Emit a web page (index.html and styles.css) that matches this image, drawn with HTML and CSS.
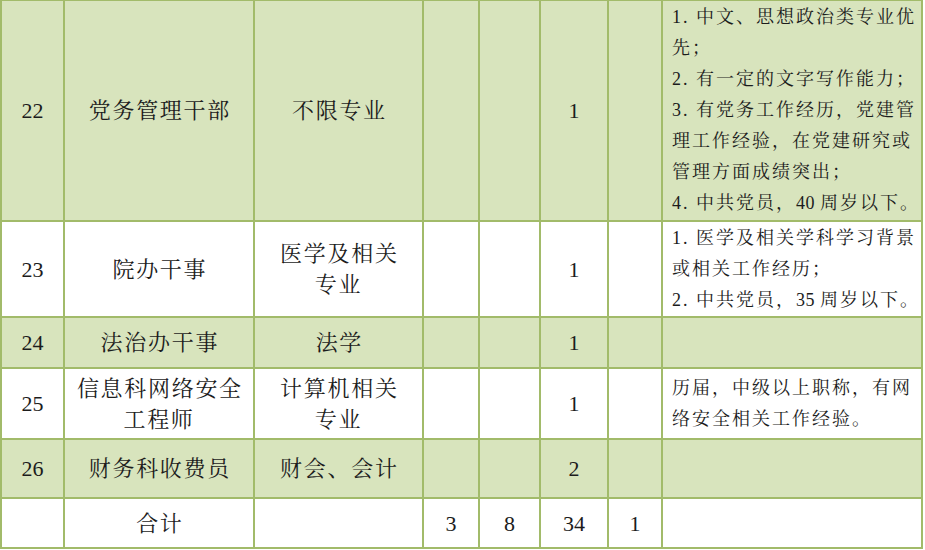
FILE: index.html
```html
<!DOCTYPE html>
<html lang="zh-CN">
<head>
<meta charset="utf-8">
<title>岗位表</title>
<link rel="stylesheet" href="styles.css">
</head>
<body>
<table class="grid">
  <colgroup>
    <col class="c-no">
    <col class="c-post">
    <col class="c-major">
    <col class="c-a">
    <col class="c-b">
    <col class="c-n">
    <col class="c-d">
    <col class="c-req">
  </colgroup>
  <tbody>
    <tr class="row green r22">
      <td>22</td>
      <td class="cn">党务管理干部</td>
      <td class="cn">不限专业</td>
      <td></td>
      <td></td>
      <td>1</td>
      <td></td>
      <td class="req">1. 中文、思想政治类专业优<br>先；<br>2. 有一定的文字写作能力；<br>3. 有党务工作经历，党建管<br>理工作经验，在党建研究或<br>管理方面成绩突出；<br>4. 中共党员，<span class="num">40 </span>周岁以下。</td>
    </tr>
    <tr class="row r23">
      <td>23</td>
      <td class="cn">院办干事</td>
      <td class="cn">医学及相关<br>专业</td>
      <td></td>
      <td></td>
      <td>1</td>
      <td></td>
      <td class="req">1. 医学及相关学科学习背景<br>或相关工作经历；<br>2. 中共党员，<span class="num">35 </span>周岁以下。</td>
    </tr>
    <tr class="row green r24">
      <td>24</td>
      <td class="cn">法治办干事</td>
      <td class="cn">法学</td>
      <td></td>
      <td></td>
      <td>1</td>
      <td></td>
      <td class="req"></td>
    </tr>
    <tr class="row r25">
      <td>25</td>
      <td class="cn">信息科网络安全<br>工程师</td>
      <td class="cn">计算机相关<br>专业</td>
      <td></td>
      <td></td>
      <td>1</td>
      <td></td>
      <td class="req">历届，中级以上职称，有网<br>络安全相关工作经验。</td>
    </tr>
    <tr class="row green r26">
      <td>26</td>
      <td class="cn">财务科收费员</td>
      <td class="cn">财会、会计</td>
      <td></td>
      <td></td>
      <td>2</td>
      <td></td>
      <td class="req"></td>
    </tr>
    <tr class="row r27">
      <td></td>
      <td class="cn">合计</td>
      <td></td>
      <td>3</td>
      <td>8</td>
      <td>34</td>
      <td>1</td>
      <td class="req"></td>
    </tr>
  </tbody>
</table>
</body>
</html>
```

FILE: styles.css
```css
html, body {
  margin: 0;
  padding: 0;
  background: #ffffff;
}

.grid {
  border-collapse: collapse;
  table-layout: fixed;
  width: 923px;
  margin-top: -1px;
  font-family: "Liberation Serif", "Times New Roman", "Noto Serif CJK SC", "Noto Sans CJK SC", serif;
  color: #1c1c1c;
}

.c-no { width: 63px; }
.c-post { width: 190px; }
.c-major { width: 169px; }
.c-a { width: 56px; }
.c-b { width: 61px; }
.c-n { width: 68px; }
.c-d { width: 54px; }
.c-req { width: 260px; }

.grid td {
  border: 2px solid #a2bb6a;
  text-align: center;
  vertical-align: middle;
  padding: 0;
  font-size: 22px;
  line-height: 31px;
  overflow: hidden;
}

.grid td.cn {
  letter-spacing: 1.7px;
  text-indent: 1.7px;
}

.row.green td {
  background: #d8e4bd;
}

.r22 { height: 221px; }
.r23 { height: 96px; }
.r24 { height: 51px; }
.r25 { height: 71px; }
.r26 { height: 59px; }
.r27 { height: 50px; }

.grid td.req {
  text-align: left;
  padding-left: 9px;
  padding-right: 2px;
  font-size: 18px;
  line-height: 31px;
  letter-spacing: 2px;
  white-space: nowrap;
}

.req .num {
  letter-spacing: 0.5px;
}
```
